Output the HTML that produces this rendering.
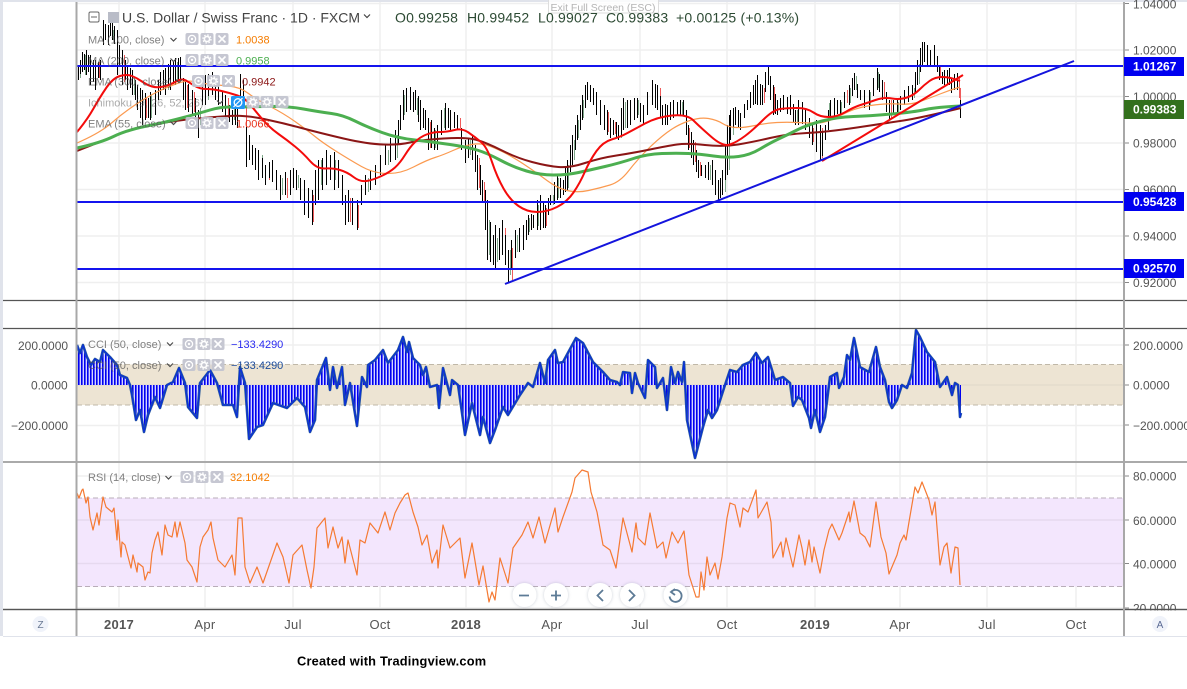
<!DOCTYPE html>
<html><head><meta charset="utf-8"><title>USDCHF</title>
<style>
html,body{margin:0;padding:0;background:#fff}
#c{position:relative;width:1187px;height:689px;overflow:hidden;background:#fff}
svg{position:absolute;left:0;top:0;filter:blur(.35px)}
text{font-family:"Liberation Sans",sans-serif}
</style></head><body><div id="c">
<svg width="1187" height="689" viewBox="0 0 1187 689">
<defs>
<pattern id="st" width="3" height="10" patternUnits="userSpaceOnUse"><rect width="3" height="10" fill="#d4d4ff"/><rect width="1.6" height="10" fill="#0000f0"/></pattern>
<filter id="sh" x="-30%" y="-30%" width="160%" height="160%"><feDropShadow dx="0" dy="0" stdDeviation="1.6" flood-color="#8a94a6" flood-opacity=".45"/></filter>
<g id="eye"><rect x="-6.5" y="-6" width="13" height="12" rx="2" fill="#c3c5d0"/><circle r="3.6" fill="none" stroke="#fff" stroke-width="1.3"/><circle r="1.2" fill="#fff"/></g>
<g id="gear"><rect x="-6.5" y="-6" width="13" height="12" rx="2" fill="#c3c5d0"/><circle r="2.6" fill="none" stroke="#fff" stroke-width="1.6"/><circle r="4" fill="none" stroke="#fff" stroke-width="1.3" stroke-dasharray="1.6 1.55"/></g>
<g id="xx"><rect x="-6.5" y="-6" width="13" height="12" rx="2" fill="#c3c5d0"/><path d="M-3.5-3.5L3.5 3.5M3.5-3.5L-3.5 3.5" stroke="#fff" stroke-width="1.6"/></g>
<path id="chev" d="M-3-1.5L0 1.5L3-1.5" fill="none" stroke="#444" stroke-width="1.2"/>
</defs>

<!-- frame -->
<rect x="0" y="0" width="3" height="636" fill="#e0e3eb"/>
<rect x="3" y="0" width="1184" height="2" fill="#e0e3eb"/>
<rect x="3" y="636" width="1184" height="1" fill="#e0e3eb"/>

<!-- grid -->
<g stroke="#efefef" stroke-width="1.5" fill="none">
<path d="M119 2V609M205 2V609M293 2V609M380 2V609M466 2V609M552 2V609M640 2V609M727 2V609M815 2V609M900 2V609M987 2V609M1076 2V609"/>
<path d="M76 3.500H1124M76 50H1124M76 96.500H1124M76 143H1124M76 189.500H1124M76 236H1124M76 282.500H1124M76 345H1124M76 425.500H1124M76 476H1124M76 608H1124"/>
</g>

<!-- RSI band -->
<rect x="77" y="498" width="1047" height="88.500" fill="#f3e6fd"/>
<path d="M77 520H1124M77 563.500H1124" stroke="#e6d9ef" stroke-width="1.500"/>
<path d="M77 498H1124M77 586.500H1124" stroke="#b9adb9" stroke-width="1" stroke-dasharray="5 3"/>

<!-- CCI band -->
<rect x="77" y="364.500" width="1047" height="40.500" fill="#ede4d3"/>
<path d="M77 385H1124" stroke="#e0d8c8" stroke-width="1"/>
<path d="M77 364.500H1124M77 405H1124" stroke="#c0b8a8" stroke-width="1" stroke-dasharray="5 3"/>

<!-- CCI hist + line -->
<polygon fill="url(#st)" points="77,385 77,345 80,353 83,345 87,357 91,365 95,359 100,362 103,350 110,357 117,365 120,375 127,378 130,385 132,395 136,420 140,410 144,432 148,415 155,397 160,408 167,385 173,382 179,368 185,383 188,407 197,418 200,383 210,370 217,383 223,405 233,405 237,417 240,367 245,383 249,439 257,427 263,425 273,403 287,408 297,398 305,407 310,432 315,420 317,380 326,358 330,390 333,367 337,388 342,367 345,405 350,383 357,426 362,377 367,387 368,365 375,360 383,350 388,363 398,350 403,337 407,352 409,342 413,358 420,365 423,375 426,367 430,387 437,385 439,408 443,368 450,395 452,380 458,385 462,413 465,435 472,403 480,435 483,417 490,443 495,430 503,407 508,415 520,395 528,383 533,387 540,363 545,383 548,360 555,350 558,363 563,362 576,338 583,343 593,362 603,372 610,380 617,382 620,385 623,372 630,373 632,393 635,373 638,383 645,398 648,360 655,367 657,388 663,378 667,410 671,367 675,383 678,372 682,382 684,362 687,420 695,458 703,427 708,410 712,418 717,410 725,385 730,370 737,372 743,365 750,362 756,353 762,363 768,357 772,370 775,380 783,377 790,383 793,406 798,397 802,400 809,418 811,428 815,410 820,432 825,417 830,377 837,373 839,388 844,377 847,355 850,360 854,338 860,367 869,372 876,347 880,367 885,380 889,402 892,408 897,400 902,385 907,388 912,373 916,330 920,337 927,352 935,362 940,387 947,377 952,395 955,383 958,385 960,417 961,413 961,385"/>
<polyline fill="none" stroke="#2a5a9a" stroke-width="2.600" stroke-linejoin="round" points="77,345 80,353 83,345 87,357 91,365 95,359 100,362 103,350 110,357 117,365 120,375 127,378 130,385 132,395 136,420 140,410 144,432 148,415 155,397 160,408 167,385 173,382 179,368 185,383 188,407 197,418 200,383 210,370 217,383 223,405 233,405 237,417 240,367 245,383 249,439 257,427 263,425 273,403 287,408 297,398 305,407 310,432 315,420 317,380 326,358 330,390 333,367 337,388 342,367 345,405 350,383 357,426 362,377 367,387 368,365 375,360 383,350 388,363 398,350 403,337 407,352 409,342 413,358 420,365 423,375 426,367 430,387 437,385 439,408 443,368 450,395 452,380 458,385 462,413 465,435 472,403 480,435 483,417 490,443 495,430 503,407 508,415 520,395 528,383 533,387 540,363 545,383 548,360 555,350 558,363 563,362 576,338 583,343 593,362 603,372 610,380 617,382 620,385 623,372 630,373 632,393 635,373 638,383 645,398 648,360 655,367 657,388 663,378 667,410 671,367 675,383 678,372 682,382 684,362 687,420 695,458 703,427 708,410 712,418 717,410 725,385 730,370 737,372 743,365 750,362 756,353 762,363 768,357 772,370 775,380 783,377 790,383 793,406 798,397 802,400 809,418 811,428 815,410 820,432 825,417 830,377 837,373 839,388 844,377 847,355 850,360 854,338 860,367 869,372 876,347 880,367 885,380 889,402 892,408 897,400 902,385 907,388 912,373 916,330 920,337 927,352 935,362 940,387 947,377 952,395 955,383 958,385 960,417 961,413"/>
<polyline fill="none" stroke="#0a30d8" stroke-width="1.300" stroke-linejoin="round" points="77,345 80,353 83,345 87,357 91,365 95,359 100,362 103,350 110,357 117,365 120,375 127,378 130,385 132,395 136,420 140,410 144,432 148,415 155,397 160,408 167,385 173,382 179,368 185,383 188,407 197,418 200,383 210,370 217,383 223,405 233,405 237,417 240,367 245,383 249,439 257,427 263,425 273,403 287,408 297,398 305,407 310,432 315,420 317,380 326,358 330,390 333,367 337,388 342,367 345,405 350,383 357,426 362,377 367,387 368,365 375,360 383,350 388,363 398,350 403,337 407,352 409,342 413,358 420,365 423,375 426,367 430,387 437,385 439,408 443,368 450,395 452,380 458,385 462,413 465,435 472,403 480,435 483,417 490,443 495,430 503,407 508,415 520,395 528,383 533,387 540,363 545,383 548,360 555,350 558,363 563,362 576,338 583,343 593,362 603,372 610,380 617,382 620,385 623,372 630,373 632,393 635,373 638,383 645,398 648,360 655,367 657,388 663,378 667,410 671,367 675,383 678,372 682,382 684,362 687,420 695,458 703,427 708,410 712,418 717,410 725,385 730,370 737,372 743,365 750,362 756,353 762,363 768,357 772,370 775,380 783,377 790,383 793,406 798,397 802,400 809,418 811,428 815,410 820,432 825,417 830,377 837,373 839,388 844,377 847,355 850,360 854,338 860,367 869,372 876,347 880,367 885,380 889,402 892,408 897,400 902,385 907,388 912,373 916,330 920,337 927,352 935,362 940,387 947,377 952,395 955,383 958,385 960,417 961,413"/>

<!-- RSI line -->
<polyline fill="none" stroke="#f57a33" stroke-width="1.200" stroke-linejoin="round" points="77,493 79,498 82,490 83,489 86,503 88,497 90,517 93,530 97,513 99,525 103,497 106,507 112,512 114,508 117,540 118,520 121,557 122,542 125,545 131,568 133,555 137,572 138,563 143,567 145,580 148,572 150,573 152,553 155,540 158,532 162,555 165,525 168,535 172,537 175,522 177,537 180,522 185,543 187,560 192,567 197,582 200,547 203,537 208,530 211,522 213,538 218,560 225,567 232,555 235,575 238,518 242,518 245,567 250,583 257,567 263,583 270,563 277,543 283,557 289,583 293,555 302,545 307,570 311,588 314,567 317,528 325,518 328,548 333,527 338,548 342,537 345,563 348,540 357,575 360,540 365,543 370,523 378,533 385,512 390,530 395,513 400,503 405,495 408,493 413,512 418,527 422,545 427,535 432,563 437,550 438,568 443,525 450,548 460,538 465,578 472,543 479,585 483,566 489,602 492,592 495,600 500,558 508,583 513,548 522,535 528,522 533,538 539,517 545,543 555,508 558,532 563,517 572,492 575,478 582,470 588,472 591,492 597,512 603,545 610,550 616,568 623,518 632,552 636,523 638,538 645,545 650,513 657,548 663,542 666,558 672,532 678,543 684,531 689,575 696,597 699,597 701,572 704,590 707,557 710,575 715,563 718,579 722,557 727,518 730,503 735,505 740,527 743,508 748,512 756,490 758,518 767,502 771,522 773,558 781,542 783,557 786,538 793,567 799,535 802,548 805,565 809,540 812,562 814,547 820,573 824,550 829,530 832,524 839,540 842,533 849,512 850,522 854,501 860,533 865,537 870,547 876,502 881,537 886,553 889,574 897,555 900,543 904,535 906,540 909,522 915,487 918,493 922,482 929,500 932,515 935,502 940,565 944,547 947,543 951,573 955,547 958,548 960,585"/>

<!-- candles: green/red body accents -->
<g transform="translate(.5 0)">
<path fill="none" stroke="#7fa88a" stroke-width="1" d="M80 62V78M85 55V75M103 25V42M108 28V44M113 30V40M134 78V95M151 95V118M160 75V90M168 72V90M177 62V80M200 108V125M208 80V100M215 76V90M234 100V120M240 78V96M262 155V175M282 178V195M298 175V188M321 160V185M335 160V180M368 178V192M388 150V165M397 135V158M404 95V115M417 98V115M435 130V148M444 108V128M470 140V155M489 220V255M497 238V262M510 250V275M517 235V252M529 218V232M538 205V226M553 195V205M558 178V198M568 165V188M574 140V160M578 120V138M583 100V118M621 128V138M625 102V128M638 100V115M652 85V103M670 105V118M682 102V115M710 165V180M725 175V192M729 135V170M733 112V135M747 102V110M755 85V100M768 70V84M783 97V110M797 110V122M829 103V118M841 102V115M850 88V103M856 76V90M870 92V106M878 72V88M898 102V113M914 88V98M919 64V84M924 44V62"/>
<path fill="none" stroke="#ef5a5a" stroke-width="1" d="M90 60V82M99 62V78M117 34V72M124 55V82M146 98V118M187 85V108M194 92V112M228 98V118M246 105V165M252 148V162M269 165V180M287 178V198M313 195V222M350 198V222M358 205V228M423 112V128M430 122V148M460 118V128M479 158V188M484 182V202M487 205V258M505 228V252M512 248V280M546 208V226M600 102V122M608 112V132M615 122V134M660 88V108M689 128V148M695 142V162M700 162V176M720 182V198M764 88V103M774 87V113M793 112V122M813 128V142M822 128V158M847 90V103M884 82V98M891 100V118M934 46V64M940 66V78M951 80V92M959 76V98M960 88V112"/>

<!-- candle wicks -->
<path fill="none" stroke="#000" stroke-width="1" d="M78 67V80M80 60V74M82 52V72M84 54V70M86 50V75M88 55V72M90 55V85M93 60V82M95 60V90M98 62V78M100 60V80M103 20V45M105 24V40M108 25V45M110 18V36M112 15V40M114 26V44M117 30V75M119 45V66M122 50V85M125 60V80M127 65V90M130 68V88M132 70V95M135 80V100M137 85V110M140 88V118M142 90V125M145 93V120M148 98V118M150 92V120M155 90V115M158 80V100M160 72V95M163 70V90M165 68V95M168 64V88M170 60V90M173 62V84M175 58V85M178 58V80M180 57V80M183 78V100M185 80V110M188 84V112M192 90V115M195 98V118M198 110V138M202 85V105M205 75V105M208 74V96M212 72V95M215 80V100M218 85V105M222 92V112M225 95V120M229 105V122M232 110V125M235 98V125M237 95V128M240 74V97M243 80V100M246 127V167M249 135V160M252 145V165M255 148V170M258 150V180M262 158V178M265 165V185M269 162V178M272 160V182M276 170V190M280 175V200M285 172V195M290 170V195M293 168V188M296 170V190M300 178V200M304 180V215M308 188V218M312 190V225M315 170V205M318 160V200M322 158V190M326 150V185M330 155V180M334 152V190M338 160V188M342 175V205M345 195V225M348 190V222M352 198V225M357 200V230M361 185V205M365 175V195M370 170V190M375 165V185M380 155V175M385 145V165M390 138V162M395 130V160M398 120V145M400 105V130M403 90V120M406 88V112M410 87V110M413 92V112M415 90V110M418 96V122M420 100V130M423 108V128M425 110V130M428 118V150M431 120V148M434 128V150M437 125V150M441 110V135M445 103V130M448 108V128M450 110V130M454 112V128M457 115V130M461 128V150M465 140V163M468 138V158M472 135V160M475 145V172M477 155V190M480 165V195M482 180V203M485 190V230M487 200V260M490 222V262M493 235V265M495 225V268M499 228V260M502 220V255M505 235V265M508 250V282M511 240V270M515 230V258M519 228V252M523 225V250M526 220V240M528 215V235M531 214V230M533 215V228M537 200V230M540 195V230M543 202V228M545 205V228M548 198V215M550 195V205M554 182V204M557 175V200M560 178V198M563 180V195M565 168V192M567 160V190M570 145V172M572 135V165M575 125V150M577 115V140M580 105V130M582 95V120M585 85V108M587 82V100M590 85V102M593 88V105M596 92V115M600 100V125M604 105V130M607 110V135M610 118V138M613 120V135M616 122V138M618 125V140M621 108V135M623 98V130M627 100V128M630 100V125M634 98V120M637 98V118M640 103V122M643 105V125M647 92V115M652 80V105M655 84V108M657 85V110M660 96V118M662 105V125M665 104V125M667 105V125M670 102V120M673 100V118M677 102V116M680 100V116M683 100V115M686 110V135M688 125V150M691 132V158M693 140V165M696 150V172M698 160V178M701 165V176M705 165V178M708 162V180M712 160V185M715 170V195M718 180V200M720 178V198M722 170V195M725 145V180M727 125V175M729 115V145M730 110V140M733 108V128M735 107V125M738 110V128M740 113V130M744 104V118M747 100V110M750 92V108M753 85V105M755 80V104M757 75V105M760 84V105M762 85V105M765 72V92M768 67V85M770 76V100M773 85V115M775 94V114M777 100V115M780 98V112M783 95V110M787 97V114M790 95V115M793 104V122M795 110V125M798 100V125M802 102V124M805 110V130M809 118V138M812 125V145M816 120V152M820 125V160M822 132V156M825 125V140M828 110V130M830 100V120M834 98V116M837 100V114M840 100V115M844 92V108M849 85V105M852 78V96M854 73V90M857 84V98M860 90V100M864 90V108M869 90V110M873 78V96M877 68V90M879 74V92M882 80V100M886 92V112M889 100V120M893 100V115M897 100V115M900 96V110M904 90V105M908 86V102M912 85V100M915 72V92M917 60V85M920 48V72M922 42V65M924 42V62M927 45V65M930 50V66M934 45V65M937 56V72M939 65V80M942 72V84M944 70V85M947 70V84M949 68V85M951 78V93M954 74V90M957 73V90M960 100V118"/>
</g>

<!-- MAs -->
<path fill="none" stroke="#fb9a50" stroke-width="1.200" d="M77 143 Q100 133 111.500 123 Q123 113 135 105 Q147 97 157 92 Q167 87 177 83.500 Q187 80 193.500 81.500 Q200 83 208.500 84 Q217 85 228.500 86 Q240 87 248.500 93.500 Q257 100 270 106.500 Q283 113 295 121.500 Q307 130 315 136.500 Q323 143 336.500 151.500 Q350 160 361.500 166.500 Q373 173 386.500 173.500 Q400 174 413.500 167 Q427 160 435 157.500 Q443 155 453 150.500 Q463 146 471.500 144.500 Q480 143 486.500 145 Q493 147 503 152 Q513 157 525 165 Q537 173 547 180.500 Q557 188 567 190.500 Q577 193 588.500 190.500 Q600 188 610 185 Q620 182 628.500 171 Q637 160 647 150 Q657 140 667 132.500 Q677 125 688.500 121 Q700 117 708.500 118.500 Q717 120 722.500 123.500 Q728 127 735.500 127.500 Q743 128 755 125.500 Q767 123 777 122.500 Q787 122 797 122.500 Q807 123 817 123 Q827 123 840.500 115.500 Q854 108 870.500 105.500 Q887 103 898.500 104 Q910 105 920 101.500 Q930 98 940 94 Q950 90 960 87"/>
<path fill="none" stroke="#8b1616" stroke-width="2" d="M77 151 Q100 142 116.500 135 Q133 128 156.500 124 Q180 120 196.500 118.500 Q213 117 229 116 Q245 115 264 119 Q283 123 301.500 128 Q320 133 343.500 138.500 Q367 144 383.500 144.500 Q400 145 410 142.500 Q420 140 443.500 138.500 Q467 137 477 140 Q487 143 502 150.500 Q517 158 532 162 Q547 166 558.500 167 Q570 168 585 163 Q600 158 616.500 155.500 Q633 153 650 149.500 Q667 146 677 144.500 Q687 143 705 145 Q723 147 738 144.500 Q753 142 770 138 Q787 134 807 133 Q827 132 857 127.500 Q887 123 903.500 120.500 Q920 118 961 108"/>
<path fill="none" stroke="#4caf50" stroke-width="3" d="M77 148 Q100 143 113.500 136.500 Q127 130 147 126 Q167 122 183.500 117.500 Q200 113 210 110 Q220 107 230 107 Q240 107 263.500 106.500 Q287 106 303.500 109 Q320 112 331.500 113.500 Q343 115 355 121 Q367 127 382 132.500 Q397 138 415 140 Q433 142 450 144.500 Q467 147 477 150 Q487 153 500 160 Q513 167 526.500 171 Q540 175 553.500 175 Q567 175 578.500 172.500 Q590 170 605 166.500 Q620 163 633.500 158.500 Q647 154 662 153.500 Q677 153 688.500 153.500 Q700 154 713.500 156 Q727 158 738.500 156.500 Q750 155 760 149 Q770 143 778.500 139 Q787 135 797 130 Q807 125 822 121 Q837 117 853.500 116.500 Q870 116 892 114 Q914 112 925.500 109.500 Q937 107 961 106"/>
<path fill="none" stroke="#f40b0b" stroke-width="2" d="M77 132 Q87 120 93.500 108.500 Q100 97 106.500 87.500 Q113 78 120 76 Q127 74 132 76 Q137 78 142 81.500 Q147 85 152 86.500 Q157 88 163.500 86.500 Q170 85 176 81.500 Q182 78 186 80.500 Q190 83 195 86 Q200 89 206.500 89 Q213 89 221.500 91 Q230 93 237.500 95.500 Q245 98 251 105.500 Q257 113 263.500 120.500 Q270 128 278.500 134 Q287 140 295 146.500 Q303 153 310 161 Q317 169 325 168.500 Q333 168 340 170 Q347 172 353.500 177 Q360 182 366.500 181 Q373 180 381.500 176 Q390 172 395 167.500 Q400 163 405 155 Q410 147 415 142 Q420 137 426.500 134.500 Q433 132 440 132 Q447 132 454.500 130 Q462 128 468.500 132.500 Q475 137 481 142 Q487 147 492 162 Q497 177 503.500 188.500 Q510 200 518.500 206 Q527 212 537 212 Q547 212 557 207 Q567 202 573.500 192.500 Q580 183 585 171.500 Q590 160 596.500 151 Q603 142 611.500 139.500 Q620 137 626.500 133.500 Q633 130 645 123.500 Q657 117 672 115.500 Q687 114 693.500 120.500 Q700 127 711.500 137 Q723 147 730 144.500 Q737 142 745 136 Q753 130 763 120 Q773 110 780 109 Q787 108 797 108 Q807 108 813.500 112.500 Q820 117 828.500 117 Q837 117 845.500 112 Q854 107 860.500 105 Q867 103 875.500 100 Q884 97 892 98.500 Q900 100 907 97.500 Q914 95 919 90 Q924 85 929.500 81 Q935 77 942.500 77 Q950 77 960 81"/>
<path d="M822 161L963 75" stroke="#f40b0b" stroke-width="2" fill="none"/>

<!-- blue lines -->
<path d="M76 66H1124M76 202H1124M76 269H1124" stroke="#1414ee" stroke-width="2" fill="none"/>
<path d="M505 284L1074 61" stroke="#1414dd" stroke-width="2" fill="none"/>

<!-- separators + axes -->
<path d="M3 300.500H1187M3 328.500H1187M3 609.500H1187" stroke="#555" stroke-width="1.200"/>
<path d="M3 462H1187" stroke="#aaa" stroke-width="2"/>
<path d="M76.500 2V636M1124 2V636" stroke="#a8a8a8" stroke-width="2"/>
<path d="M1125 3.500h4M1125 50h4M1125 96.500h4M1125 143h4M1125 189.500h4M1125 236h4M1125 282.500h4M1125 345h4M1125 385h4M1125 425h4M1125 476h4M1125 520h4M1125 563.500h4M1125 608h4" stroke="#888" stroke-width="1"/>

<!-- price axis labels -->
<g font-size="12" fill="#555">
<text x="1133" y="8.500">1.04000</text><text x="1133" y="54.500">1.02000</text><text x="1133" y="101">1.00000</text><text x="1133" y="147.500">0.98000</text><text x="1133" y="194">0.96000</text><text x="1133" y="240.500">0.94000</text><text x="1133" y="287">0.92000</text>
<text x="1133" y="350">200.0000</text><text x="1133" y="389.500">0.0000</text><text x="1133" y="430">−200.0000</text>
<text x="1133" y="480.500">80.0000</text><text x="1133" y="525">60.0000</text><text x="1133" y="568.500">40.0000</text><text x="1133" y="612.500">20.0000</text>
<text x="18" y="350">200.0000</text><text x="31" y="389.500">0.0000</text><text x="11" y="430">−200.0000</text>
</g>
<rect x="1125" y="610.500" width="62" height="25" fill="#fff"/>
<path d="M3 609.500H1187" stroke="#555" stroke-width="1.200"/>
<path d="M1124 2V636" stroke="#a8a8a8" stroke-width="2"/>

<!-- price tags -->
<g font-size="12" font-weight="bold" fill="#fff">
<rect x="1124" y="57" width="60" height="19" fill="#0000f0"/><text x="1133" y="70.500">1.01267</text>
<rect x="1124" y="192" width="60" height="19" fill="#0000f0"/><text x="1133" y="206">0.95428</text>
<rect x="1124" y="259" width="60" height="19" fill="#0000f0"/><text x="1133" y="272.500">0.92570</text>
<rect x="1124" y="100" width="60" height="19" fill="#33701c"/><text x="1133" y="113.500">0.99383</text>
</g>

<!-- time axis -->
<g font-size="13" fill="#555" text-anchor="middle" letter-spacing=".3">
<text x="119" y="629" font-weight="bold">2017</text><text x="205" y="629">Apr</text><text x="293" y="629">Jul</text><text x="380" y="629">Oct</text>
<text x="466" y="629" font-weight="bold">2018</text><text x="552" y="629">Apr</text><text x="640" y="629">Jul</text><text x="727" y="629">Oct</text>
<text x="815" y="629" font-weight="bold">2019</text><text x="900" y="629">Apr</text><text x="987" y="629">Jul</text><text x="1076" y="629">Oct</text>
</g>
<circle cx="40.500" cy="624" r="8" fill="#f0f3fa"/><text x="40.500" y="628" font-size="10" fill="#6a7a94" text-anchor="middle">Z</text>
<circle cx="1160" cy="624" r="8" fill="#f0f3fa"/><text x="1160" y="628" font-size="10" fill="#5a6a94" text-anchor="middle">A</text>

<!-- header -->
<rect x="548.500" y="-1" width="110" height="14" fill="#fff" fill-opacity=".8" stroke="#ddd"/>
<text x="603" y="11" font-size="10.500" fill="#b5b5b5" text-anchor="middle">Exit Full Screen (ESC)</text>
<rect x="89" y="12" width="10" height="10" rx="1.500" fill="#fff" stroke="#666"/><path d="M91 17h6" stroke="#666"/>
<rect x="108" y="12" width="11" height="11" fill="#b9bcc7"/>
<text x="122" y="22.500" font-size="14" fill="#444">U.S. Dollar / Swiss Franc · 1D · FXCM</text>
<use href="#chev" x="367" y="16"/>
<g font-size="14" fill="#2c4a33" letter-spacing=".2">
<text x="395" y="22.500">O0.99258</text><text x="467" y="22.500">H0.99452</text><text x="538" y="22.500">L0.99027</text><text x="606" y="22.500">C0.99383</text><text x="676" y="22.500">+0.00125 (+0.13%)</text>
</g>

<!-- legends -->
<g font-size="11" fill="#555" fill-opacity=".75">
<text x="88" y="43.500">MA (100, close)</text>
<text x="88" y="64.500">MA (200, close)</text>
<text x="88" y="85.500">EMA (300, close)</text>
<text x="88" y="106.500" fill-opacity=".5">Ichimoku (9, 26, 52, 26)</text>
<text x="88" y="127.500">EMA (55, close)</text>
<text x="88" y="348">CCI (50, close)</text>
<text x="88" y="369">CCI (50, close)</text>
<text x="88" y="481">RSI (14, close)</text>
</g>
<g opacity=".95">
<use href="#chev" x="173.500" y="39.500"/><use href="#eye" x="192" y="39"/><use href="#gear" x="207" y="39"/><use href="#xx" x="222" y="39"/>
<use href="#chev" x="173.500" y="60"/><use href="#eye" x="192" y="60"/><use href="#gear" x="207" y="60"/><use href="#xx" x="222" y="60"/>
<use href="#chev" x="179" y="81"/><use href="#eye" x="198.500" y="81"/><use href="#gear" x="213.500" y="81"/><use href="#xx" x="228.500" y="81"/>
<use href="#chev" x="220" y="102"/><use href="#gear" x="253" y="102"/><use href="#gear" x="267" y="102"/><use href="#xx" x="282" y="102"/>
<use href="#chev" x="173.500" y="123"/><use href="#eye" x="192" y="123"/><use href="#gear" x="207" y="123"/><use href="#xx" x="222" y="123"/>
<use href="#chev" x="170" y="344"/><use href="#eye" x="189" y="344"/><use href="#gear" x="204" y="344"/><use href="#xx" x="218" y="344"/>
<use href="#chev" x="170" y="365"/><use href="#eye" x="189" y="365"/><use href="#gear" x="204" y="365"/><use href="#xx" x="218" y="365"/>
<use href="#chev" x="168.500" y="477.500"/><use href="#eye" x="187" y="477"/><use href="#gear" x="202" y="477"/><use href="#xx" x="217" y="477"/>
</g>
<rect x="231" y="96" width="14" height="13" rx="1.500" fill="#2196f3"/><circle cx="238" cy="102.500" r="3.800" fill="none" stroke="#fff" stroke-width="1.300"/><path d="M233.500 107L242.500 98" stroke="#fff" stroke-width="1.200"/>
<g font-size="11">
<text x="236" y="43.500" fill="#f57c00">1.0038</text>
<text x="236" y="64.500" fill="#4caf50">0.9958</text>
<text x="242" y="85.500" fill="#8b1616">0.9942</text>
<text x="236" y="127.500" fill="#e8301a">1.0066</text>
<text x="231" y="348" fill="#2a2af0">−133.4290</text>
<text x="231" y="369" fill="#1c4c9c">−133.4290</text>
<text x="230" y="481" fill="#f57c00">32.1042</text>
</g>

<!-- nav buttons -->
<g fill="#fff" filter="url(#sh)">
<circle cx="524.500" cy="595" r="12"/><circle cx="556" cy="595" r="12"/><circle cx="600" cy="595" r="12"/><circle cx="632" cy="595" r="12"/><circle cx="675.500" cy="595" r="12"/>
</g>
<g fill="none" stroke="#5d7b96" stroke-width="1.800">
<path d="M519 595.500h10M551 595.500h10M556 590.500v10M603 590l-5.500 5.500l5.500 5.500M629 590l5.500 5.500l-5.500 5.500"/>
<path d="M671 592a6 6 0 1 1-1.400 4.500M675 589l-4 3l4 3"/>
</g>

<text x="297" y="665.500" font-size="12.800" font-weight="bold" fill="#000" letter-spacing=".2">Created with Tradingview.com</text>
</svg>
</div></body></html>
